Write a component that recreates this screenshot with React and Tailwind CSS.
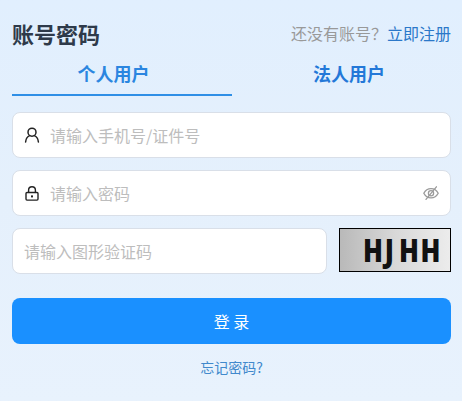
const cjk = "font-['Noto_Sans_CJK_SC','Noto_Sans',sans-serif]";

function UserIcon() {
  return (
    <svg width="16" height="16" viewBox="0 0 16 16" fill="none" stroke="currentColor" strokeWidth="1.5" strokeLinecap="round">
      <circle cx="8" cy="5.2" r="4" />
      <path d="M1.6 15c.3-3.4 2.2-5.8 4.2-6.4M14.4 15c-.3-3.4-2.2-5.8-4.2-6.4" />
    </svg>
  );
}

function LockIcon() {
  return (
    <svg width="14" height="15" viewBox="0 0 14 15" fill="none" stroke="currentColor" strokeWidth="1.4">
      <path d="M3.6 6.5V4a3.4 3.2 0 0 1 6.8 0v2.5" />
      <rect x="1" y="6.5" width="12" height="7.6" rx="1" />
      <rect x="6" y="9.4" width="2" height="2" fill="currentColor" stroke="none" />
    </svg>
  );
}

function EyeIcon() {
  return (
    <svg width="16" height="16" viewBox="0 0 16 16" fill="none" stroke="#9a9a9a" strokeWidth="1.3" strokeLinecap="round">
      <path d="M.8 8.2C2.4 5.2 5 3.6 8 3.6s5.6 1.6 7.2 4.6c-1.6 3-4.2 4.6-7.2 4.6S2.4 11.2.8 8.2z" />
      <circle cx="8" cy="8.2" r="2.6" />
      <path d="M3 14.4 13.4 1.8" />
    </svg>
  );
}

function Field({ icon, placeholder, right, className }) {
  return (
    <div className={`h-[46px] flex items-center bg-white border border-[#d9dfe8] rounded-lg ${className}`}>
      {icon && <div className="w-[37px] shrink-0 flex justify-center pl-[1px] text-[#222]">{icon}</div>}
      <input
        placeholder={placeholder}
        className={`flex-1 min-w-0 h-full outline-none bg-transparent text-[16px] placeholder:text-[#bdbdbd] ${icon ? "" : "pl-[11px]"}`}
      />
      {right}
    </div>
  );
}

function App() {
  return (
    <div className={`w-[462px] h-[401px] overflow-hidden bg-gradient-to-b from-[#e1effe] via-[#e5f0fc] to-[#e8f2fd] pl-3 pr-[11px] ${cjk}`}>
      <div className="flex items-center justify-between pt-[15px] h-[50px]">
        <h1 className="text-[22px] leading-[34px] font-bold text-[#2e3a4a]">账号密码</h1>
        <div className="text-[16px] text-[#999]">
          还没有账号？<span className="text-[#2b78c9]">立即注册</span>
        </div>
      </div>

      <div className="flex h-[46px]">
        <div className="w-[220px] flex items-center justify-center pr-[17px] pt-[3px] border-b-2 border-[#2f8fe6] text-[18px] font-bold text-[#2b86e0]">
          个人用户
        </div>
        <div className="flex-1 flex items-center justify-center pl-[15px] pt-[3px] border-b-2 border-transparent text-[18px] font-bold text-[#2378d8]">
          法人用户
        </div>
      </div>

      <div className="mt-[16px] flex flex-col gap-[12px]">
        <Field icon={<UserIcon />} placeholder="请输入手机号/证件号" />
        <Field
          icon={<LockIcon />}
          placeholder="请输入密码"
          right={<div className="mr-[11px]"><EyeIcon /></div>}
        />
        <div className="flex items-start justify-between">
          <Field placeholder="请输入图形验证码" className="w-[315px]" />
          <div className="w-[112px] h-[44px] border border-black bg-gradient-to-r from-[#b9b9b9] via-[#d8d8d8] to-[#ececec] flex items-center justify-end pr-[8px] overflow-hidden">
            <span className="font-['Open_Sans',sans-serif] font-extrabold text-[31px] leading-none tracking-[2px] text-[#111] scale-x-[0.84] origin-right whitespace-nowrap">
              HJ<span className="ml-[4px]">HH</span>
            </span>
          </div>
        </div>
      </div>

      <button className="mt-[24px] w-full h-[46px] rounded-lg bg-[#1a90ff] text-white text-[16px]">
        登 录
      </button>
      <div className="mt-[13px] text-center text-[14px] text-[#4189cc]">忘记密码?</div>
    </div>
  );
}

export default App;
